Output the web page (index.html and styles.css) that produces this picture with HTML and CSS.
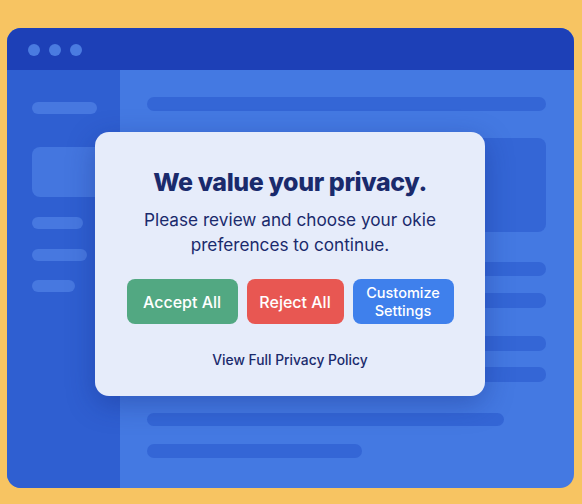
FILE: index.html
```html
<!DOCTYPE html>
<html lang="en">
<head>
<meta charset="utf-8">
<title>Privacy consent</title>
<link rel="stylesheet" href="styles.css">
</head>
<body>
<div class="window">
  <div class="titlebar">
    <span class="dot"></span><span class="dot"></span><span class="dot"></span>
  </div>
  <div class="content">
    <aside class="sidebar">
      <div class="sbar sbar-a"></div>
      <div class="sbox"></div>
      <div class="sbar sbar-b"></div>
      <div class="sbar sbar-c"></div>
      <div class="sbar sbar-d"></div>
    </aside>
    <main class="main">
      <div class="mbar m1"></div>
      <div class="mrow"><div class="mbox"></div></div>
      <div class="mbar m2"></div>
      <div class="mbar m3"></div>
      <div class="mbar m4"></div>
      <div class="mbar m5"></div>
      <div class="mbar m6"></div>
      <div class="mbar m7"></div>
    </main>
  </div>
  <div class="modal">
    <h1 class="title">We value your privacy.</h1>
    <p class="desc">Please review and choose your okie<br>preferences to continue.</p>
    <div class="actions">
      <button class="btn accept">Accept All</button>
      <button class="btn reject">Reject All</button>
      <button class="btn custom">Customize<br>Settings</button>
    </div>
    <a class="policy" href="#">View Full Privacy Policy</a>
  </div>
</div>
</body>
</html>
```

FILE: styles.css
```css
* { box-sizing: border-box; }
html, body { margin: 0; padding: 0; }
body {
  background: #f7c462;
  width: 582px;
  height: 504px;
  overflow: hidden;
  font-family: Inter, "Noto Sans", sans-serif;
}
.window {
  position: relative;
  margin: 28px 8px 0 7px;
  width: 567px;
  height: 460px;
  border-radius: 14px;
  overflow: hidden;
  background: #4479e2;
  display: flex;
  flex-direction: column;
}
.titlebar {
  height: 42px;
  background: #1d40b7;
  display: flex;
  align-items: center;
  gap: 9px;
  padding-left: 21px;
  padding-top: 1px;
}
.dot {
  width: 12px;
  height: 12px;
  border-radius: 50%;
  background: #4a7be0;
}
.content {
  flex: 1;
  display: flex;
}
.sidebar {
  width: 113px;
  background: #2f5fd1;
  padding: 32px 0 0 25px;
  display: flex;
  flex-direction: column;
  align-items: flex-start;
}
.sbar {
  height: 12px;
  border-radius: 6px;
  background: #4778e0;
}
.sbar-a { width: 65px; }
.sbox {
  margin-top: 33px;
  width: 80px;
  height: 50px;
  border-radius: 8px;
  background: #4476df;
}
.sbar-b { width: 51px; margin-top: 20px; }
.sbar-c { width: 55px; margin-top: 20px; }
.sbar-d { width: 43px; margin-top: 19px; }
.main {
  flex: 1;
  padding: 27px 28px 0 27px;
  display: flex;
  flex-direction: column;
  align-items: flex-start;
}
.mbar {
  width: 100%;
  height: 14px;
  border-radius: 7px;
  background: #3466d6;
}
.mrow {
  width: 100%;
  display: flex;
  justify-content: flex-end;
  margin-top: 27px;
}
.mbox {
  width: 90px;
  height: 94px;
  border-radius: 8px;
  background: #3466d6;
}
.m2 { margin-top: 30px; }
.m3 { margin-top: 17px; height: 15px; }
.m4 { margin-top: 28px; height: 15px; }
.m5 { margin-top: 16px; height: 15px; }
.m6 { margin-top: 31px; width: 357px; height: 13px; }
.m7 { margin-top: 18px; width: 215px; }
.modal {
  position: absolute;
  left: 88px;
  top: 104px;
  width: 390px;
  height: 264px;
  border-radius: 14px;
  background: #e6ecfa;
  box-shadow: 0 8px 28px rgba(16, 36, 120, 0.35);
  display: flex;
  flex-direction: column;
  align-items: center;
  padding-top: 35px;
  color: #1a2a6c;
}
.title {
  margin: 0;
  font-size: 25px;
  line-height: 30px;
  font-weight: 800;
  letter-spacing: -0.4px;
}
.desc {
  margin: 10px 0 0;
  font-size: 17.2px;
  line-height: 25px;
  font-weight: 400;
  text-align: center;
}
.actions {
  margin-top: 22px;
  display: flex;
  gap: 9px;
}
.btn {
  height: 45px;
  border: none;
  border-radius: 8px;
  color: #fff;
  font-family: inherit;
  font-weight: 500;
  font-size: 16px;
  padding: 0;
}
.accept { width: 111px; background: #52a882; }
.reject { width: 97px; background: #e85752; }
.custom {
  width: 101px;
  background: #3f80ec;
  font-size: 14.5px;
  line-height: 18px;
}
.policy {
  margin-top: 28px;
  font-size: 13.8px;
  font-weight: 500;
  color: #1a2a6c;
  text-decoration: none;
}
```
